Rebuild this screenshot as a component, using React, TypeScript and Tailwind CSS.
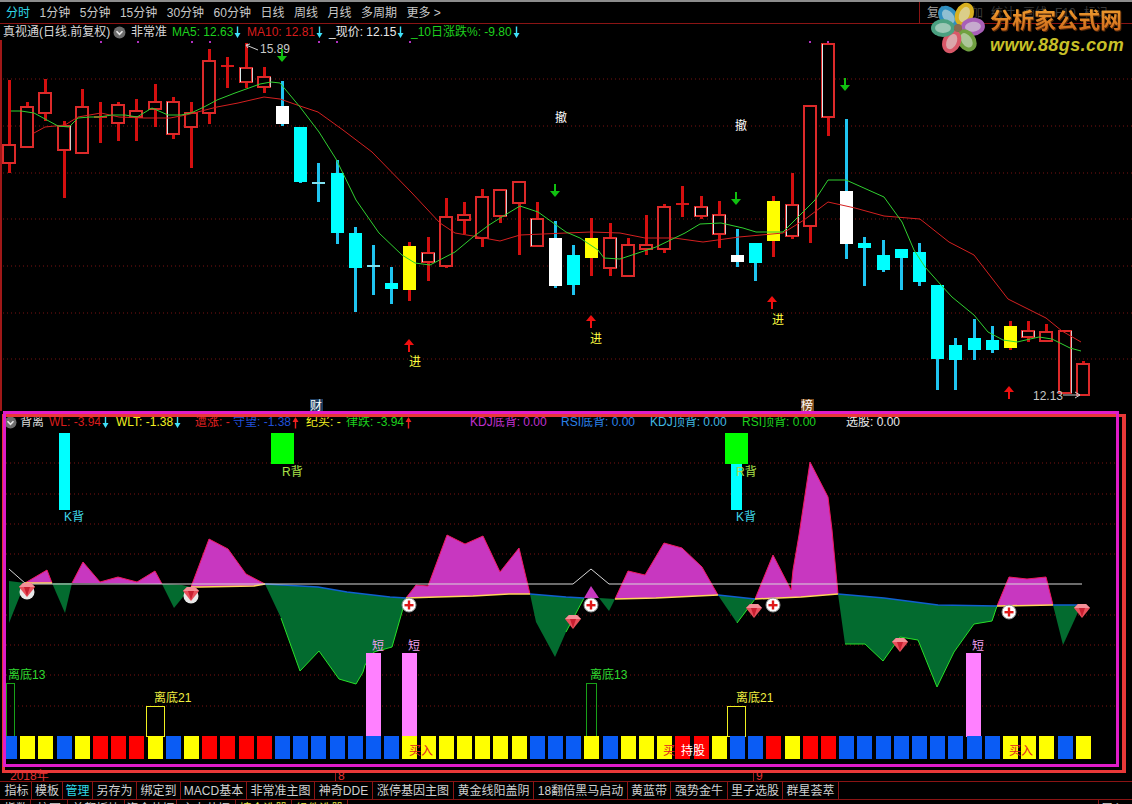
const FONT = "'Liberation Sans','Noto Sans CJK SC',sans-serif";

type Kind = "r" | "c" | "w" | "y";
type Bar = [number, number, number, number, Kind, number?];

const xAt = (i: number) => Math.round(9 + 18.2 * i);

// high, body top, body bottom, low, kind, pale edge (1 right, 2 left, 3 both)
const bars: Bar[] = [
  [80, 145, 163, 173, "r"], [102, 107, 147, 147, "r"], [79, 93, 113, 121, "r"], [121, 126, 150, 198, "r", 1],
  [89, 107, 153, 153, "r"], [102, 116, 117, 143, "r"], [102, 105, 123, 141, "r"], [99, 111, 117, 141, "r"],
  [84, 102, 109, 127, "r"], [97, 102, 134, 139, "r", 2], [102, 113, 127, 168, "r"], [49, 61, 113, 124, "r"],
  [57, 65, 66, 88, "r"], [43, 68, 82, 88, "r", 3], [67, 77, 87, 93, "r", 1], [81, 106, 124, 126, "w"],
  [127, 127, 182, 183, "c"], [163, 182, 183, 202, "c"], [160, 173, 233, 244, "c"], [227, 233, 268, 312, "c"],
  [245, 265, 267, 295, "c"], [267, 283, 289, 304, "c"], [242, 246, 290, 301, "y"], [237, 253, 262, 281, "r", 3],
  [198, 217, 266, 268, "r"], [202, 215, 220, 234, "r"], [189, 197, 238, 247, "r"], [189, 190, 216, 223, "r", 1],
  [182, 182, 203, 255, "r"], [202, 219, 246, 247, "r", 2], [221, 238, 286, 288, "w"], [245, 255, 285, 295, "c"],
  [218, 238, 258, 276, "y"], [223, 238, 268, 276, "r", 1], [238, 245, 276, 276, "r"], [215, 245, 249, 255, "r"],
  [204, 207, 249, 253, "r"], [186, 203, 205, 217, "r"], [196, 207, 216, 219, "r", 3], [201, 215, 234, 248, "r", 3],
  [229, 255, 262, 267, "w"], [243, 243, 263, 281, "c"], [196, 201, 241, 257, "y"], [173, 205, 236, 239, "r", 3],
  [106, 106, 226, 243, "r"], [44, 44, 117, 136, "r", 2], [119, 191, 244, 259, "w"], [237, 243, 248, 286, "c"],
  [240, 255, 270, 272, "c"], [249, 249, 258, 290, "c"], [243, 252, 282, 286, "c"], [285, 285, 359, 390, "c"],
  [338, 345, 360, 390, "c"], [319, 338, 350, 360, "c"], [326, 340, 350, 353, "c"], [321, 326, 348, 350, "y"],
  [321, 331, 337, 342, "r", 3], [324, 332, 341, 341, "r"], [331, 331, 393, 393, "r", 1], [361, 364, 395, 395, "r"],
];

const ma5 =
  "11,111 21,111 34,113 58,126 69,127 78,118 90,117 99,117 112,115 125,115 137,117 152,108 168,115 181,115 191,113 204,107 217,100 235,93 249,88 260,84 271,82 280,83 300,107 319,132 336,159 356,200 379,233 402,255 415,263 430,265 455,252 473,237 489,225 505,215 520,206 538,212 566,232 580,238 598,250 604,258 620,259 656,247 685,233 700,224 721,223 743,228 756,232 783,232 815,200 828,180 846,180 884,197 902,222 914,250 925,267 941,285 952,297 974,315 988,332 1003,340 1017,342 1039,337 1052,339 1070,348 1081,351";
const ma10 =
  "34,133 45,127 65,125 78,117 101,113 119,117 144,118 170,118 186,115 217,107 238,103 264,97 280,99 300,106 318,112 343,130 372,152 412,193 440,223 455,233 473,236 500,241 520,235 566,233 591,232 620,233 645,238 674,238 703,242 739,237 783,233 804,220 828,202 855,208 884,216 920,219 949,242 974,255 1008,299 1046,318 1062,331 1081,342";

// oscillator pieces: tops are the drawn edge, closed against the slow line
const purple = [
  "25,583 47,570 52,583",
  "72,583 83,562 100,582 118,577 137,582 155,571 162,584",
  "191,587 209,539 228,549 246,574 265,584 254,586 200,587",
  "406,598 416,585 428,586 447,535 465,544 483,536 500,572 519,548 530,594 509,594 473,596 437,597",
  "584,598 591,586 599,598",
  "615,599 628,571 645,575 664,543 682,548 702,567 718,595 656,598",
  "755,599 773,555 791,590 793,570 799,535 810,462 828,497 832,530 838,594 801,597",
  "997,606 1009,577 1027,579 1046,577 1053,605",
];
const green = [
  "9,581 25,583 9,623",
  "52,583 72,583 65,613",
  "162,584 182,585 191,587 174,608",
  "265,584 281,618 300,671 319,651 339,679 356,684 363,672 365,665 374,652 392,647 406,598 390,597 347,592 318,587",
  "530,594 566,597 584,598 566,632 555,657 536,622",
  "599,598 615,599 609,611",
  "718,595 755,599 737,623",
  "838,594 845,644 865,644 883,661 893,647 900,637 918,640 937,687 954,652 974,624 992,621 997,606 938,605 884,598",
  "1053,605 1079,605 1079,610 1063,645",
];
const slowYellow = ["25,583 52,583", "191,587 200,587 254,586 265,584", "406,598 437,597 473,596 509,594 530,594", "615,599 656,598 718,595", "755,599 801,597 838,594", "997,606 1053,605"];
const slowBlue = ["265,584 318,587 347,592 390,597 406,598", "530,594 566,597 584,598", "718,595 755,599", "838,594 884,598 938,605 997,606", "1053,605 1079,605"];
const purpleEdge = ["25,583 47,570 52,583", "72,583 83,562 100,582 118,577 137,582 155,571 162,584", "191,587 209,539 228,549 246,574 265,584", "406,598 416,585 428,586 447,535 465,544 483,536 500,572 519,548 530,594", "615,599 628,571 645,575 664,543 682,548 702,567 718,595", "755,599 773,555 791,590 793,570 799,535 810,462 828,497 832,530 838,594", "997,606 1009,577 1027,579 1046,577 1053,605"];
const greenEdge = ["281,618 300,671 319,651 339,679 356,684 363,672 365,665 374,652 392,647 406,598", "566,632 584,598", "737,623 755,599", "845,644 865,644 883,661 893,647 900,637 918,640 937,687 954,652 974,624 992,621 997,606"];

const BLUE = "#0a5cf5";
const YEL = "#ffff00";
const RED = "#ff0000";
const blockColors = [
  BLUE, YEL, YEL, BLUE, YEL, RED, RED, RED, YEL, BLUE, YEL, RED, RED, RED, RED, BLUE, BLUE, BLUE, BLUE, BLUE, BLUE, BLUE,
  YEL, YEL, YEL, YEL, YEL, YEL, YEL, BLUE, BLUE, BLUE, YEL, BLUE, YEL, YEL, YEL, RED, RED, YEL, BLUE, BLUE, RED, YEL, RED, RED,
  BLUE, BLUE, BLUE, BLUE, BLUE, BLUE, BLUE, BLUE, BLUE, YEL, YEL, YEL, BLUE, YEL,
];

const mainGrid = [79, 126, 173, 219, 266, 313, 359];
const lowGrid = [463, 494, 524, 554, 615, 645, 675, 706];
const dots = [100, 137, 191, 209, 318, 336, 409, 809, 827];

const tabs = [
  { t: "指标", w: "w-[30px]", c: "text-[#d0d0d0]" },
  { t: "模板", w: "w-[31px]", c: "text-[#d0d0d0]" },
  { t: "管理", w: "w-[30px]", c: "text-[#30d8e8]" },
  { t: "另存为", w: "w-[44px]", c: "text-[#d0d0d0]" },
  { t: "绑定到", w: "w-[44px]", c: "text-[#d0d0d0]" },
  { t: "MACD基本", w: "w-[66px]", c: "text-[#d0d0d0]" },
  { t: "非常准主图", w: "w-[68px]", c: "text-[#d0d0d0]" },
  { t: "神奇DDE", w: "w-[58px]", c: "text-[#d0d0d0]" },
  { t: "涨停基因主图", w: "w-[81px]", c: "text-[#d0d0d0]" },
  { t: "黄金线阳盖阴", w: "w-[80px]", c: "text-[#d0d0d0]" },
  { t: "18翻倍黑马启动", w: "w-[94px]", c: "text-[#d0d0d0]" },
  { t: "黄蓝带", w: "w-[43px]", c: "text-[#d0d0d0]" },
  { t: "强势金牛", w: "w-[57px]", c: "text-[#d0d0d0]" },
  { t: "里子选股", w: "w-[55px]", c: "text-[#d0d0d0]" },
  { t: "群星荟萃", w: "w-[56px]", c: "text-[#d0d0d0]" },
];

const lowerTabs = [
  { t: "指数", w: "w-[29px]", c: "text-[#d0d0d0]" },
  { t: "校园", w: "w-[37px]", c: "text-[#d0d0d0]" },
  { t: "首都板块", w: "w-[57px]", c: "text-[#d0d0d0]" },
  { t: "资金共振", w: "w-[52px]", c: "text-[#d0d0d0]" },
  { t: "主力共振", w: "w-[59px]", c: "text-[#d0d0d0]" },
  { t: "填仓选股", w: "w-[56px]", c: "text-[#e0e040]" },
  { t: "组件选股", w: "w-[56px]", c: "text-[#e0e040]" },
];

function TinyArrow({ color, up }: { color: string; up?: boolean }) {
  return (
    <svg width="7" height="13" viewBox="0 0 7 13" className="shrink-0">
      <path d={up ? "M3.5 1 L6.5 6 L4.2 6 L4.2 12.5 L2.8 12.5 L2.8 6 L0.5 6 Z" : "M3.5 12 L6.5 7 L4.2 7 L4.2 0.5 L2.8 0.5 L2.8 7 L0.5 7 Z"} fill={color} />
    </svg>
  );
}

function RoundChevron() {
  return (
    <svg width="13" height="13" viewBox="0 0 13 13">
      <circle cx="6.5" cy="6.5" r="6" fill="#6e6e6e" />
      <path d="M3.5 5.2 L6.5 8.4 L9.5 5.2" fill="none" stroke="#e8e8e8" strokeWidth="1.6" />
    </svg>
  );
}

function Candle({ bar, i }: { bar: Bar; i: number }) {
  const [high, top, bottom, low, kind, pale] = bar;
  const x = xAt(i);
  const cool = kind === "c" || kind === "w";
  const wick = cool ? "#1fc4f0" : "#d40f0f";
  const h = bottom - top;
  const cross = h <= 2;
  const fill = kind === "c" ? "#00ffff" : kind === "w" ? "#ffffff" : kind === "y" ? "#ffff00" : "#000000";
  return (
    <g shapeRendering="crispEdges">
      <rect x={x - 1} y={high} width="3" height={low - high} fill={wick} />
      {cross ? (
        <rect x={x - 6} y={top} width="13" height="2" fill={cool ? "#7fe0f0" : "#d81818"} />
      ) : kind === "r" ? (
        <>
          <rect x={x - 6} y={top} width="12" height={h} fill="#000000" stroke="#dc2a2a" strokeWidth="1.5" />
          {(pale === 1 || pale === 3) && <rect x={x + 5.5} y={top} width="1" height={h} fill="#d8c8c8" />}
          {(pale === 2 || pale === 3) && <rect x={x - 6.5} y={top} width="1" height={h} fill="#d8e8e8" />}
        </>
      ) : (
        <rect x={x - 6} y={top} width="13" height={h} fill={fill} />
      )}
    </g>
  );
}

function DownArrow({ x, y }: { x: number; y: number }) {
  return (
    <g fill="#10c010">
      <rect x={x - 1} y={y} width="2" height="8" />
      <path d={`M${x - 5} ${y + 7} L${x + 5} ${y + 7} L${x} ${y + 13} Z`} />
    </g>
  );
}

function UpArrow({ x, y }: { x: number; y: number }) {
  return (
    <g fill="#f01010">
      <rect x={x - 1} y={y + 5} width="2" height="8" />
      <path d={`M${x - 5} ${y + 6} L${x + 5} ${y + 6} L${x} ${y} Z`} />
    </g>
  );
}

function Gem({ x, y, disc }: { x: number; y: number; disc?: boolean }) {
  return (
    <g>
      {disc && <circle cx={x} cy={y + 2} r="7.5" fill="#e8e8e8" />}
      <path d={`M${x - 8} ${y - 3} L${x - 4} ${y - 7} L${x + 4} ${y - 7} L${x + 8} ${y - 3} L${x} ${y + 7} Z`} fill="#e8505c" />
      <path d={`M${x - 8} ${y - 3} L${x + 8} ${y - 3} L${x + 4} ${y - 7} L${x - 4} ${y - 7} Z`} fill="#f49098" />
      <path d={`M${x - 3} ${y - 3} L${x + 3} ${y - 3} L${x} ${y + 6} Z`} fill="#c81e30" />
    </g>
  );
}

function PlusBadge({ x, y }: { x: number; y: number }) {
  return (
    <g>
      <circle cx={x} cy={y} r="7" fill="#ffffff" stroke="#909090" strokeWidth="1" />
      <rect x={x - 4.5} y={y - 1} width="9" height="2.4" fill="#e01818" />
      <rect x={x - 1.2} y={y - 4.5} width="2.4" height="9" fill="#e01818" />
    </g>
  );
}

function Flower() {
  const petals = [
    { r: -40, c: "#2f8fc0" },
    { r: 25, c: "#d8b020" },
    { r: 85, c: "#a860b8" },
    { r: 145, c: "#70a040" },
    { r: 205, c: "#d85868" },
    { r: 270, c: "#4aa080" },
  ];
  return (
    <svg width="56" height="56" viewBox="-28 -28 56 56" className="absolute left-[930px] top-[0px]">
      {petals.map((p) => (
        <g key={p.r} transform={`rotate(${p.r})`}>
          <ellipse cx="0" cy="-15" rx="9" ry="12" fill={p.c} />
          <ellipse cx="0" cy="-15" rx="5" ry="8" fill="#dfe8e0" opacity="0.55" />
        </g>
      ))}
      <circle r="4" fill="#8a6a50" />
    </svg>
  );
}

function TabRow({ items }: { items: { t: string; w: string; c: string }[] }) {
  return (
    <div className="flex h-full">
      {items.map((tab) => (
        <div key={tab.t} className={`${tab.w} ${tab.c} shrink-0 border-r border-[#8a1414] text-center text-[12px] leading-[18px]`}>
          {tab.t}
        </div>
      ))}
    </div>
  );
}

export default function App() {
  return (
    <div className="relative h-[804px] w-[1132px] overflow-hidden bg-black text-[12px]" style={{ fontFamily: FONT }}>
      {/* period bar */}
      <div className="h-[2px] bg-[#8c8c8c]" />
      <div className="flex h-[22px] items-center gap-[9.5px] border-b border-[#8a1414] pl-[6px] text-[#c8c8c8]">
        <span className="text-[#30d8e8]">分时</span>
        <span>1分钟</span>
        <span>5分钟</span>
        <span>15分钟</span>
        <span>30分钟</span>
        <span>60分钟</span>
        <span>日线</span>
        <span>周线</span>
        <span>月线</span>
        <span>多周期</span>
        <span>更多 &gt;</span>
        <div className="ml-auto flex h-full w-[213px] items-center gap-[8px] whitespace-nowrap border-l border-[#8a1414] pl-[7px] text-[#3a3a3a]">
          <span className="text-[#a0a0a0]">复权</span>
          <span>叠加</span>
          <span>统计</span>
          <span>画线</span>
          <span>F10</span>
          <span>标记</span>
        </div>
      </div>

      {/* main legend */}
      <div className="flex h-[16px] items-center pl-[3px] leading-none">
        <span className="w-[110px] shrink-0 text-[#d8d8d8]">真视通(日线.前复权)</span>
        <div className="w-[18px] shrink-0"><RoundChevron /></div>
        <span className="w-[41px] shrink-0 text-[#d8d8d8]">非常准</span>
        <div className="flex w-[75px] shrink-0 items-center gap-[1px] text-[#1ed01e]">MA5: 12.63<TinyArrow color="#40e0f8" /></div>
        <div className="flex w-[82px] shrink-0 items-center gap-[1px] text-[#d81c1c]">MA10: 12.81<TinyArrow color="#40e0f8" /></div>
        <div className="flex w-[82px] shrink-0 items-center gap-[1px] text-[#e8e8e8]">_现价: 12.15<TinyArrow color="#40e0f8" /></div>
        <div className="flex shrink-0 items-center gap-[1px] text-[#1ed01e]">_10日涨跌%: -9.80<TinyArrow color="#40e0f8" /></div>
      </div>

      {/* candle chart */}
      <svg width="1132" height="371" viewBox="0 40 1132 371" className="block">
        <rect x="0" y="40" width="2" height="371" fill="#a01818" />
        {mainGrid.map((y) => (
          <line key={y} x1="3" x2="1132" y1={y} y2={y} stroke="#7a1212" strokeDasharray="1 3" />
        ))}
        {dots.map((x) => (
          <rect key={x} x={x} y="41" width="2" height="2" fill="#b030c0" />
        ))}
        {bars.map((b, i) => (
          <Candle key={i} bar={b} i={i} />
        ))}
        <polyline points={ma10} fill="none" stroke="#d42020" strokeWidth="1" />
        <polyline points={ma5} fill="none" stroke="#30d030" strokeWidth="1" />

        <path d="M258 50 L246 45 M246 45 L250 44 M246 45 L248 48" stroke="#d0d0d0" fill="none" />
        <text x="260" y="53" fill="#c8c8c8" className="text-[12px]">15.89</text>
        <text x="1033" y="400" fill="#c8c8c8" className="text-[12px]">12.13</text>
        <path d="M1063 395 L1080 395 M1080 395 L1075 392 M1080 395 L1075 398" stroke="#c8c8c8" fill="none" />

        <DownArrow x={282} y={49} />
        <DownArrow x={555} y={184} />
        <DownArrow x={736} y={192} />
        <DownArrow x={845} y={78} />
        <UpArrow x={409} y={339} />
        <UpArrow x={591} y={315} />
        <UpArrow x={772} y={296} />
        <UpArrow x={1009} y={386} />

        <text x="409" y="366" fill="#ffff40" className="text-[12px]">进</text>
        <text x="590" y="343" fill="#ffff40" className="text-[12px]">进</text>
        <text x="772" y="324" fill="#ffff40" className="text-[12px]">进</text>
        <text x="555" y="122" fill="#ffffff" className="text-[12px]">撤</text>
        <text x="735" y="130" fill="#ffffff" className="text-[12px]">撤</text>

        <rect x="310" y="399" width="13" height="12" fill="#1c3a5c" />
        <text x="310" y="410" fill="#ffffff" className="text-[12px]">财</text>
        <rect x="801" y="399" width="13" height="12" fill="#7a4a1c" />
        <text x="801" y="410" fill="#ffffff" className="text-[12px]">榜</text>
      </svg>

      {/* indicator legend */}
      <div className="flex h-[20px] items-center pl-[4px] pt-[2px] leading-none">
        <div className="w-[16px] shrink-0"><RoundChevron /></div>
        <span className="w-[29px] shrink-0 text-[#d8d8d8]">背离</span>
        <div className="flex w-[67px] shrink-0 items-center gap-[1px] text-[#d81c1c]">WL: -3.94<TinyArrow color="#40e0f8" /></div>
        <div className="flex w-[79px] shrink-0 items-center gap-[1px] text-[#f0f020]">WLT: -1.38<TinyArrow color="#40e0f8" /></div>
        <span className="w-[38px] shrink-0 text-[#e02020]">遭涨: -</span>
        <div className="flex w-[73px] shrink-0 items-center gap-[1px] text-[#2050d8]">守望: -1.38<TinyArrow color="#f02020" up /></div>
        <span className="w-[40px] shrink-0 text-[#f0f020]">纪买: -</span>
        <div className="flex w-[124px] shrink-0 items-center gap-[1px] text-[#1ed01e]">律跌: -3.94<TinyArrow color="#f02020" up /></div>
        <span className="w-[91px] shrink-0 text-[#c030d0]">KDJ底背: 0.00</span>
        <span className="w-[89px] shrink-0 text-[#2a80e8]">RSI底背: 0.00</span>
        <span className="w-[92px] shrink-0 text-[#40b8e0]">KDJ顶背: 0.00</span>
        <span className="w-[104px] shrink-0 text-[#1ed01e]">RSI顶背: 0.00</span>
        <span className="shrink-0 text-[#e8e8e8]">选股: 0.00</span>
      </div>

      {/* oscillator chart */}
      <svg width="1132" height="339" viewBox="0 431 1132 339" className="block">
        {lowGrid.map((y) => (
          <line key={y} x1="6" x2="1116" y1={y} y2={y} stroke="#7a1212" strokeDasharray="1 3" />
        ))}

        <g shapeRendering="crispEdges">
          <rect x="59" y="433" width="11" height="77" fill="#00ffff" />
          <rect x="731" y="464" width="11" height="46" fill="#00ffff" />
          <rect x="271" y="433" width="23" height="31" fill="#00ff00" />
          <rect x="725" y="433" width="23" height="31" fill="#00ff00" />
        </g>
        <text x="64" y="521" fill="#40d8e8" className="text-[12px]">K背</text>
        <text x="736" y="521" fill="#40d8e8" className="text-[12px]">K背</text>
        <text x="282" y="476" fill="#a8e048" className="text-[12px]">R背</text>
        <text x="736" y="476" fill="#a8e048" className="text-[12px]">R背</text>

        {green.map((p) => (
          <polygon key={p} points={p} fill="#036b2f" />
        ))}
        {purple.map((p) => (
          <polygon key={p} points={p} fill="#c837c0" />
        ))}
        {purpleEdge.map((p) => (
          <polyline key={p} points={p} fill="none" stroke="#f01860" strokeWidth="1" />
        ))}
        {greenEdge.map((p) => (
          <polyline key={p} points={p} fill="none" stroke="#28e028" strokeWidth="1" />
        ))}
        {slowBlue.map((p) => (
          <polyline key={p} points={p} fill="none" stroke="#1060d0" strokeWidth="1.5" />
        ))}
        {slowYellow.map((p) => (
          <polyline key={p} points={p} fill="none" stroke="#ffd858" strokeWidth="1.5" />
        ))}
        <polyline points="9,569 26,584 573,584 591,569 609,584 1082,584" fill="none" stroke="#d8d8d8" strokeWidth="1" />

        <g shapeRendering="crispEdges">
          <rect x="366" y="653" width="15" height="84" fill="#ff80ff" />
          <rect x="402" y="653" width="15" height="84" fill="#ff80ff" />
          <rect x="966" y="653" width="15" height="84" fill="#ff80ff" />
          <rect x="6.5" y="683.5" width="8" height="53" fill="none" stroke="#18a018" />
          <rect x="586.5" y="683.5" width="10" height="53" fill="none" stroke="#18a018" />
          <rect x="146.5" y="706.5" width="18" height="30" fill="none" stroke="#f0f020" />
          <rect x="727.5" y="706.5" width="18" height="30" fill="none" stroke="#f0f020" />
          {blockColors.map((c, i) => (
            <rect key={i} x={i === 0 ? 6 : xAt(i) - 7} y="736" width={i === 0 ? 11 : 15} height="23" fill={c} />
          ))}
        </g>

        <text x="372" y="650" fill="#f0a0f0" className="text-[12px]">短</text>
        <text x="408" y="650" fill="#f0a0f0" className="text-[12px]">短</text>
        <text x="972" y="650" fill="#f0a0f0" className="text-[12px]">短</text>
        <text x="8" y="679" fill="#30d830" className="text-[12px]">离底13</text>
        <text x="590" y="679" fill="#30d830" className="text-[12px]">离底13</text>
        <text x="154" y="702" fill="#f0f040" className="text-[12px]">离底21</text>
        <text x="736" y="702" fill="#f0f040" className="text-[12px]">离底21</text>
        <text x="409" y="755" fill="#e02020" className="text-[12px]">买入</text>
        <text x="663" y="755" fill="#e02020" className="text-[12px]">买</text>
        <text x="681" y="755" fill="#ffffff" className="text-[12px]">持股</text>
        <text x="1009" y="755" fill="#e02020" className="text-[12px]">买入</text>

        <Gem x={27} y={590} disc />
        <Gem x={191} y={594} disc />
        <Gem x={573} y={622} />
        <Gem x={754} y={611} />
        <Gem x={900} y={645} />
        <Gem x={1082} y={611} />
        <PlusBadge x={409} y={605} />
        <PlusBadge x={591} y={605} />
        <PlusBadge x={773} y={605} />
        <PlusBadge x={1009} y={612} />
      </svg>

      {/* date axis */}
      <div className="flex h-[11px] text-[12px] leading-[12px] text-[#e03030]">
        <div className="w-[336px] shrink-0 border-r border-[#a01818] pl-[10px]">2018年</div>
        <div className="w-[418px] shrink-0 border-r border-[#a01818] pl-[2px]">8</div>
        <div className="pl-[2px]">9</div>
      </div>

      {/* template tabs */}
      <div className="h-[18px] border-t border-[#8a1414] pl-[2px]">
        <TabRow items={tabs} />
      </div>
      <div className="flex h-[18px] items-start justify-between border-t border-[#8a1414] pl-[2px]">
        <TabRow items={lowerTabs} />
        <div className="w-[34px] border-l border-[#8a1414] pl-[2px] text-[12px] leading-[18px] text-[#d0d0d0]">周入</div>
      </div>

      {/* logo stamped over the window */}
      <Flower />
      <div className="absolute left-[990px] top-[7px] w-[134px] whitespace-nowrap bg-gradient-to-b from-[#f0a030] to-[#c86018] bg-clip-text text-[22px] font-bold leading-[28px] text-transparent drop-shadow-[1px_1px_0_#5a2a08]">
        分析家公式网
      </div>
      <div className="absolute left-[990px] top-[34px] text-[18px] font-bold italic leading-[22px] tracking-[0.4px] text-[#c8c028]">
        www.88gs.com
      </div>

      {/* highlight frame drawn on top of the indicator pane */}
      <div className="absolute left-[2px] top-[414px] h-[359px] w-[1124px] border-[3px] border-r-[4px] border-[#e83838]" />
      <div className="absolute left-[3px] top-[411px] h-[356px] w-[1116px] border-[3px] border-[#e01cc8]" />
    </div>
  );
}
